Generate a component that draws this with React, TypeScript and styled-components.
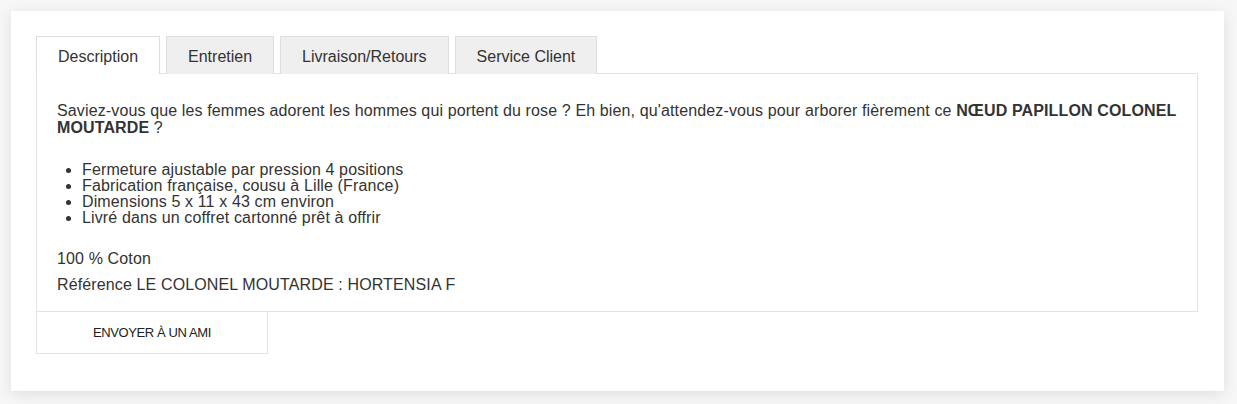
import * as React from 'react';
import styled, { createGlobalStyle } from 'styled-components';

const GlobalStyle = createGlobalStyle`
  html, body {
    margin: 0;
    padding: 0;
    background: #f7f7f7;
  }
  body {
    font-family: "Liberation Sans", Arial, sans-serif;
    color: #333;
  }
`;

const Page = styled.div`
  padding: 11px 13px 14px 11px;
`;

const Card = styled.div`
  background: #fff;
  box-shadow: 0 3px 14px rgba(0, 0, 0, 0.1);
  padding: 25px 26px 37px 25px;
`;

const TabBar = styled.div`
  display: flex;
  gap: 6px;
`;

interface TabProps {
  $active?: boolean;
}

const Tab = styled.div<TabProps>`
  height: 38px;
  padding: 0 21px;
  display: flex;
  align-items: center;
  padding-top: 2px;
  box-sizing: border-box;
  font-size: 16px;
  border: 1px solid #dedede;
  border-bottom: none;
  background: ${(p) => (p.$active ? '#fff' : '#efefef')};
  margin-bottom: -1px;
  position: relative;
  z-index: ${(p) => (p.$active ? 1 : 0)};
`;

const Panel = styled.div`
  border: 1px solid #e3e3e3;
  padding: 28px 20px 16px 20px;
  font-size: 16px;
  letter-spacing: 0.13px;
`;

const Intro = styled.p`
  margin: 0;
  line-height: 17px;
`;

const Features = styled.ul`
  margin: 26px 0 0 0;
  padding-left: 25px;
  line-height: 16px;
`;

const Details = styled.div`
  margin-top: 23px;
  display: flex;
  flex-direction: column;
  gap: 6px;
`;

const Line = styled.p`
  margin: 0;
  line-height: 20px;
`;

const Actions = styled.div`
  display: flex;
`;

const SendButton = styled.button`
  width: 232px;
  height: 43px;
  margin-top: -1px;
  padding: 0;
  background: #fff;
  border: 1px solid #e3e3e3;
  font-family: "Liberation Sans", Arial, sans-serif;
  font-size: 13px;
  letter-spacing: -0.4px;
  color: #222;
  text-transform: uppercase;
  cursor: pointer;
`;

const tabs = ['Description', 'Entretien', 'Livraison/Retours', 'Service Client'];

const features = [
  'Fermeture ajustable par pression 4 positions',
  'Fabrication française, cousu à Lille (France)',
  'Dimensions 5 x 11 x 43 cm environ',
  'Livré dans un coffret cartonné prêt à offrir',
];

export default function App() {
  const [active, setActive] = React.useState(0);
  return (
    <Page>
      <GlobalStyle />
      <Card>
        <TabBar>
          {tabs.map((t, i) => (
            <Tab key={t} $active={i === active} onClick={() => setActive(i)}>
              {t}
            </Tab>
          ))}
        </TabBar>
        <Panel>
          <Intro>
            Saviez-vous que les femmes adorent les hommes qui portent du rose ? Eh bien,
            qu'attendez-vous pour arborer fièrement ce <strong>NŒUD PAPILLON COLONEL MOUTARDE</strong> ?
          </Intro>
          <Features>
            {features.map((f) => (
              <li key={f}>{f}</li>
            ))}
          </Features>
          <Details>
            <Line>100 % Coton</Line>
            <Line>Référence LE COLONEL MOUTARDE : HORTENSIA F</Line>
          </Details>
        </Panel>
        <Actions>
          <SendButton>Envoyer à un ami</SendButton>
        </Actions>
      </Card>
    </Page>
  );
}
